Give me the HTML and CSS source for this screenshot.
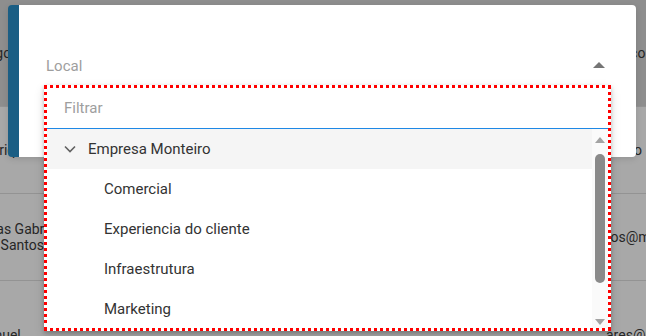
FILE: index.html
```html
<!DOCTYPE html>
<html>
<head>
  <meta charset="UTF-8">
  <title>Selecionar local</title>
  <link rel="stylesheet" href="styles.css">
</head>
<body>
  <div class="backdrop">
    <div class="bd-row bd-head">
      <div class="bd-name">Cargo</div>
      <div class="bd-mail">Banco</div>
    </div>
    <div class="bd-row">
      <div class="bd-name">Henrique</div>
      <div class="bd-mail">Turno</div>
    </div>
    <div class="bd-row">
      <div class="bd-name">Lucas Gabriel dos Santos</div>
      <div class="bd-mail">tos@monteiro.com</div>
    </div>
    <div class="bd-row bd-low">
      <div class="bd-name">Samuel</div>
      <div class="bd-mail">ares@monteiro.com</div>
    </div>
  </div>

  <div class="modal">
    <div class="field">
      <span class="field-label">Local</span>
      <span class="caret-up"></span>
    </div>
  </div>

  <div class="dropdown">
    <div class="filter">Filtrar</div>
    <div class="tree-wrap">
      <ul class="tree">
        <li class="node parent">
          <svg class="chevron" width="12" height="8" viewBox="0 0 12 8">
            <path d="M1 1.5 L6 6.5 L11 1.5" fill="none" stroke="#616161" stroke-width="1.6"/>
          </svg>
          <span>Empresa Monteiro</span>
        </li>
        <li class="node child">Comercial</li>
        <li class="node child">Experiencia do cliente</li>
        <li class="node child">Infraestrutura</li>
        <li class="node child">Marketing</li>
      </ul>
      <div class="scrollbar">
        <span class="sb-arrow up"></span>
        <span class="sb-thumb"></span>
        <span class="sb-arrow down"></span>
      </div>
    </div>
  </div>
</body>
</html>
```

FILE: styles.css
```css
body {
  margin: 0;
  width: 646px;
  height: 336px;
  overflow: hidden;
  position: relative;
  font-family: Roboto, "Noto Sans", sans-serif;
  background: #a8a8a8;
  color: #262626;
}

/* table behind the overlay */
.backdrop {
  font-size: 14px;
  line-height: 16px;
}

.bd-row {
  display: flex;
  align-items: center;
  height: 86px;
  border-top: 1px solid #939393;
  background: #a8a8a8;
}

.bd-head {
  height: 106px;
  border-top: none;
  background: #8e8e8e;
}

.bd-low {
  align-items: flex-start;
  padding-top: 46px;
  box-sizing: border-box;
}

.bd-name {
  margin-left: -26px;
  width: 94px;
}

.bd-mail {
  margin-left: auto;
  width: 40px;
  white-space: nowrap;
}

/* modal */
.modal {
  position: absolute;
  top: 5px;
  left: 8px;
  width: 628px;
  height: 152px;
  box-sizing: border-box;
  background: white;
  border-radius: 4px;
  border-left: 11px solid #1b5e84;
  padding: 48px 31px 0 27px;
  box-shadow: 0 2px 6px rgba(0,0,0,0.12);
}

.field {
  display: flex;
  align-items: center;
  justify-content: space-between;
  height: 26px;
}

.field-label {
  font-size: 15px;
  color: #9e9e9e;
}

.caret-up {
  width: 0;
  height: 0;
  border-left: 6px solid transparent;
  border-right: 6px solid transparent;
  border-bottom: 6px solid #757575;
  margin-top: -2px;
}

/* dropdown panel */
.dropdown {
  position: absolute;
  top: 85px;
  left: 44px;
  width: 567px;
  height: 246px;
  box-sizing: border-box;
  background: white;
  border: 3px dotted #ff0000;
  box-shadow: 0 2px 4px rgba(0,0,0,0.2), 0 4px 10px rgba(0,0,0,0.14);
  display: flex;
  flex-direction: column;
}

.filter {
  height: 40px;
  flex: none;
  display: flex;
  align-items: center;
  padding-left: 17px;
  font-size: 15px;
  color: #9e9e9e;
  border-bottom: 1px solid #1e88e5;
}

.tree-wrap {
  flex: 1;
  display: flex;
  min-height: 0;
}

.tree {
  flex: 1;
  list-style: none;
  margin: 0;
  padding: 0;
}

.node {
  height: 40px;
  display: flex;
  align-items: center;
  font-size: 15px;
  color: #333;
}

.parent {
  background: #f5f5f5;
  padding-left: 17px;
  gap: 12px;
}

.child {
  padding-left: 57px;
}

.scrollbar {
  width: 16px;
  flex: none;
  background: #fafafa;
  display: flex;
  flex-direction: column;
  align-items: center;
  padding: 8px 0 3px;
  box-sizing: border-box;
}

.sb-arrow {
  width: 0;
  height: 0;
  border-left: 5px solid transparent;
  border-right: 5px solid transparent;
}

.sb-arrow.up {
  border-bottom: 6px solid #a3a3a3;
}

.sb-arrow.down {
  margin-top: auto;
  border-top: 6px solid #a3a3a3;
}

.sb-thumb {
  width: 10px;
  height: 129px;
  margin-top: 11px;
  border-radius: 5px;
  background: #8a8a8a;
}
```
